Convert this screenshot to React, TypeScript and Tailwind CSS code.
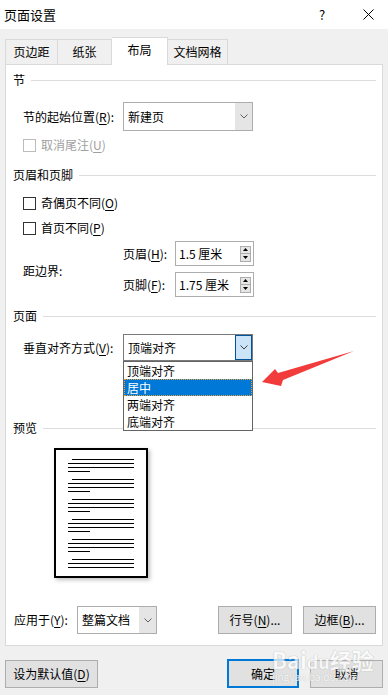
import React from "react";

const U = ({ c }: { c: string }) => (
  <span className="underline underline-offset-[2px] decoration-1">{c}</span>
);

function Chevron({ color = "#606060" }: { color?: string }) {
  return (
    <svg width="8" height="5" viewBox="0 0 8 5">
      <path d="M0.5 0.5 L4 4 L7.5 0.5" fill="none" stroke={color} strokeWidth="1" />
    </svg>
  );
}

function Heading({ text, cls }: { text: string; cls: string }) {
  return (
    <div className={`flex items-center h-[16px] pl-[7px] pr-[6px] ${cls}`}>
      <span className="leading-none">{text}</span>
      <div className="flex-1 h-px bg-[#dcdcdc] ml-[6px]" />
    </div>
  );
}

function Select({ value, focused }: { value: string; focused?: boolean }) {
  return (
    <div
      className={`flex h-full w-full border bg-white ${
        focused ? "border-[#7a7a7a]" : "border-[#adadad]"
      }`}
    >
      <div className="flex-1 flex items-center pl-[4px] leading-none">{value}</div>
      {focused ? (
        <div className="w-[17px] flex items-center justify-center bg-[#cce4f7] border border-[#005499]">
          <Chevron color="#404040" />
        </div>
      ) : (
        <div className="w-[17px] flex items-center justify-center bg-[#e5e5e5]">
          <Chevron />
        </div>
      )}
    </div>
  );
}

function Checkbox({ disabled }: { disabled?: boolean }) {
  return (
    <div
      className={`w-[13px] h-[13px] bg-white border ${
        disabled ? "border-[#bcbcbc]" : "border-[#333333]"
      }`}
    />
  );
}

function Spinner({ value }: { value: string }) {
  return (
    <div className="flex w-[79px] h-[25px] border border-[#adadad] bg-white">
      <div className="flex-1 flex items-center pl-[3px] leading-none">{value}</div>
      <div className="flex flex-col justify-center gap-0 pr-[2px]">
        <div className="w-[11px] h-[8px] bg-[#e5e5e5] border border-[#adadad] flex items-center justify-center">
          <svg width="5" height="3" viewBox="0 0 5 3">
            <path d="M0 3 L2.5 0 L5 3 Z" fill="#000" />
          </svg>
        </div>
        <div className="w-[11px] h-[8px] bg-[#e5e5e5] border border-[#adadad] border-t-0 flex items-center justify-center">
          <svg width="5" height="3" viewBox="0 0 5 3">
            <path d="M0 0 L2.5 3 L5 0 Z" fill="#000" />
          </svg>
        </div>
      </div>
    </div>
  );
}

function Btn({ children, cls }: { children: React.ReactNode; cls: string }) {
  return (
    <div
      className={`h-[28px] flex items-center justify-center bg-[#e1e1e1] border border-[#adadad] leading-none ${cls}`}
    >
      {children}
    </div>
  );
}

function PreviewPage() {
  const groups = [4, 4, 4, 4, 4, 3];
  return (
    <div className="ml-[48px] w-[94px] h-[130px] border-2 border-black bg-white shadow-[2px_2px_4px_rgba(0,0,0,0.25)] pt-[9px] pl-[12px]">
      {groups.map((n, gi) => (
        <div key={gi} className="h-[20px] flex flex-col gap-[3px]">
          {Array.from({ length: n }).map((_, li) => {
            let cls = "h-px bg-black w-[66px]";
            if (li === 0) cls = "h-px bg-black w-[62px] ml-[4px]";
            else if (li === 3) cls = "h-px bg-black w-[22px]";
            return <div key={li} className={cls} />;
          })}
        </div>
      ))}
    </div>
  );
}

export default function App() {
  return (
    <div className="relative w-[388px] h-[695px] bg-[#f0f0f0] text-[12px] text-black overflow-hidden font-['Noto_Sans_CJK_SC','Noto_Sans',sans-serif]">
      {/* Title bar */}
      <div className="h-[29px] bg-white flex items-center">
        <div className="pl-[4px] text-[13px] leading-none flex-1">页面设置</div>
        <div className="w-[20px] text-[13px] leading-none text-center mr-[26px]">?</div>
        <div className="w-[20px] mr-[10px] flex items-center justify-center">
          <svg width="11" height="11" viewBox="0 0 11 11">
            <path d="M0.5 0.5 L10.5 10.5 M10.5 0.5 L0.5 10.5" stroke="#000" strokeWidth="1" />
          </svg>
        </div>
      </div>

      {/* Tabs */}
      <div className="h-[35px] flex items-end pl-[5px] relative z-10">
        <div className="w-[53px] h-[25px] border border-b-0 border-[#d9d9d9] flex items-center justify-center leading-none">
          页边距
        </div>
        <div className="w-[54px] h-[25px] border border-b-0 border-l-0 border-[#d9d9d9] flex items-center justify-center leading-none">
          纸张
        </div>
        <div className="w-[56px] h-[28px] -mb-px bg-white border border-b-0 border-l-0 border-[#d9d9d9] flex items-center justify-center leading-none pb-[3px]">
          布局
        </div>
        <div className="w-[60px] h-[25px] border border-b-0 border-l-0 border-[#d9d9d9] flex items-center justify-center leading-none">
          文档网格
        </div>
      </div>

      {/* Panel */}
      <div className="mx-[5px] w-[378px] h-[582px] bg-white border border-[#d9d9d9] flex flex-col">
        <Heading text="节" cls="mt-[7px]" />

        <div className="mt-[14px] h-[29px] flex items-center pl-[17px]">
          <div className="w-[100px] leading-none">
            节的起始位置(<U c="R" />):
          </div>
          <div className="w-[130px] h-full">
            <Select value="新建页" />
          </div>
        </div>

        <div className="mt-[6px] h-[16px] flex items-center pl-[17px] text-[#a0a0a0]">
          <Checkbox disabled />
          <span className="ml-[5px] leading-none">
            取消尾注(<U c="U" />)
          </span>
        </div>

        <Heading text="页眉和页脚" cls="mt-[14px]" />

        <div className="mt-[12px] h-[16px] flex items-center pl-[17px]">
          <Checkbox />
          <span className="ml-[5px] leading-none">
            奇偶页不同(<U c="O" />)
          </span>
        </div>

        <div className="mt-[9px] h-[16px] flex items-center pl-[17px]">
          <Checkbox />
          <span className="ml-[5px] leading-none">
            首页不同(<U c="P" />)
          </span>
        </div>

        <div className="mt-[5px] h-[56px] flex pl-[17px]">
          <div className="w-[100px] flex items-center pt-[3px] leading-none">距边界:</div>
          <div className="flex flex-col gap-[6px]">
            <div className="flex items-center h-[25px]">
              <div className="w-[52px] leading-none">
                页眉(<U c="H" />):
              </div>
              <Spinner value="1.5 厘米" />
            </div>
            <div className="flex items-center h-[25px]">
              <div className="w-[52px] leading-none">
                页脚(<U c="F" />):
              </div>
              <Spinner value="1.75 厘米" />
            </div>
          </div>
        </div>

        <Heading text="页面" cls="mt-[11px]" />

        <div className="mt-[10px] h-[27px] flex items-center pl-[17px] relative z-10">
          <div className="w-[100px] leading-none">
            垂直对齐方式(<U c="V" />):
          </div>
          <div className="w-[130px] h-full relative">
            <Select value="顶端对齐" focused />
            <div className="absolute top-full left-0 w-[130px] bg-white border border-[#646464] flex flex-col">
              <div className="h-[17px] flex items-center pl-[3px] leading-none">顶端对齐</div>
              <div className="h-[17px] flex items-center pl-[3px] leading-none bg-[#0078d7] text-white outline-1 outline-dotted outline-[#f0a030] -outline-offset-1">
                居中
              </div>
              <div className="h-[17px] flex items-center pl-[3px] leading-none">两端对齐</div>
              <div className="h-[17px] flex items-center pl-[3px] leading-none">底端对齐</div>
            </div>
          </div>
        </div>

        <Heading text="预览" cls="mt-[59px]" />

        <div className="mt-[12px]">
          <PreviewPage />
        </div>

        <div className="mt-[28px] h-[28px] flex items-center pl-[8px] pr-[6px]">
          <div className="w-[63px] leading-none">
            应用于(<U c="Y" />):
          </div>
          <div className="w-[80px] h-full">
            <Select value="整篇文档" />
          </div>
          <div className="flex-1" />
          <Btn cls="w-[74px]">
            行号(<U c="N" />)...
          </Btn>
          <Btn cls="w-[73px] ml-[11px]">
            边框(<U c="B" />)...
          </Btn>
        </div>
      </div>

      {/* Bottom buttons */}
      <div className="mt-[13px] flex items-center pl-[5px] pr-[5px]">
        <Btn cls="w-[93px]">
          设为默认值(<U c="D" />)
        </Btn>
        <div className="flex-1" />
        <div className="w-[72px] h-[29px] flex items-center justify-center bg-[#e1e1e1] border-2 border-[#0078d7] leading-none">
          确定
        </div>
        <Btn cls="w-[73px] ml-[11px]">取消</Btn>
      </div>

      {/* Red arrow annotation */}
      <svg className="absolute left-0 top-0 pointer-events-none" width="388" height="695" viewBox="0 0 388 695">
        <path
          d="M262 382 L275 369 L278 373 L354 351 L283 380 L281 386 Z"
          fill="#f23b3b"
        />
      </svg>

      {/* Watermark */}
      <div className="absolute left-[272px] top-[648px] pointer-events-none flex flex-col items-start opacity-70">
        <div className="text-[22px] font-bold leading-none text-white [text-shadow:0_0_1px_#b0b0b0,0_0_1px_#b0b0b0]">
          Bai<span className="text-[18px]">du</span>经验
        </div>
        <div className="text-[10px] leading-none text-white [text-shadow:0_0_1px_#a0a0a0] mt-[2px]">
          jingyan.baidu.com
        </div>
      </div>
    </div>
  );
}
